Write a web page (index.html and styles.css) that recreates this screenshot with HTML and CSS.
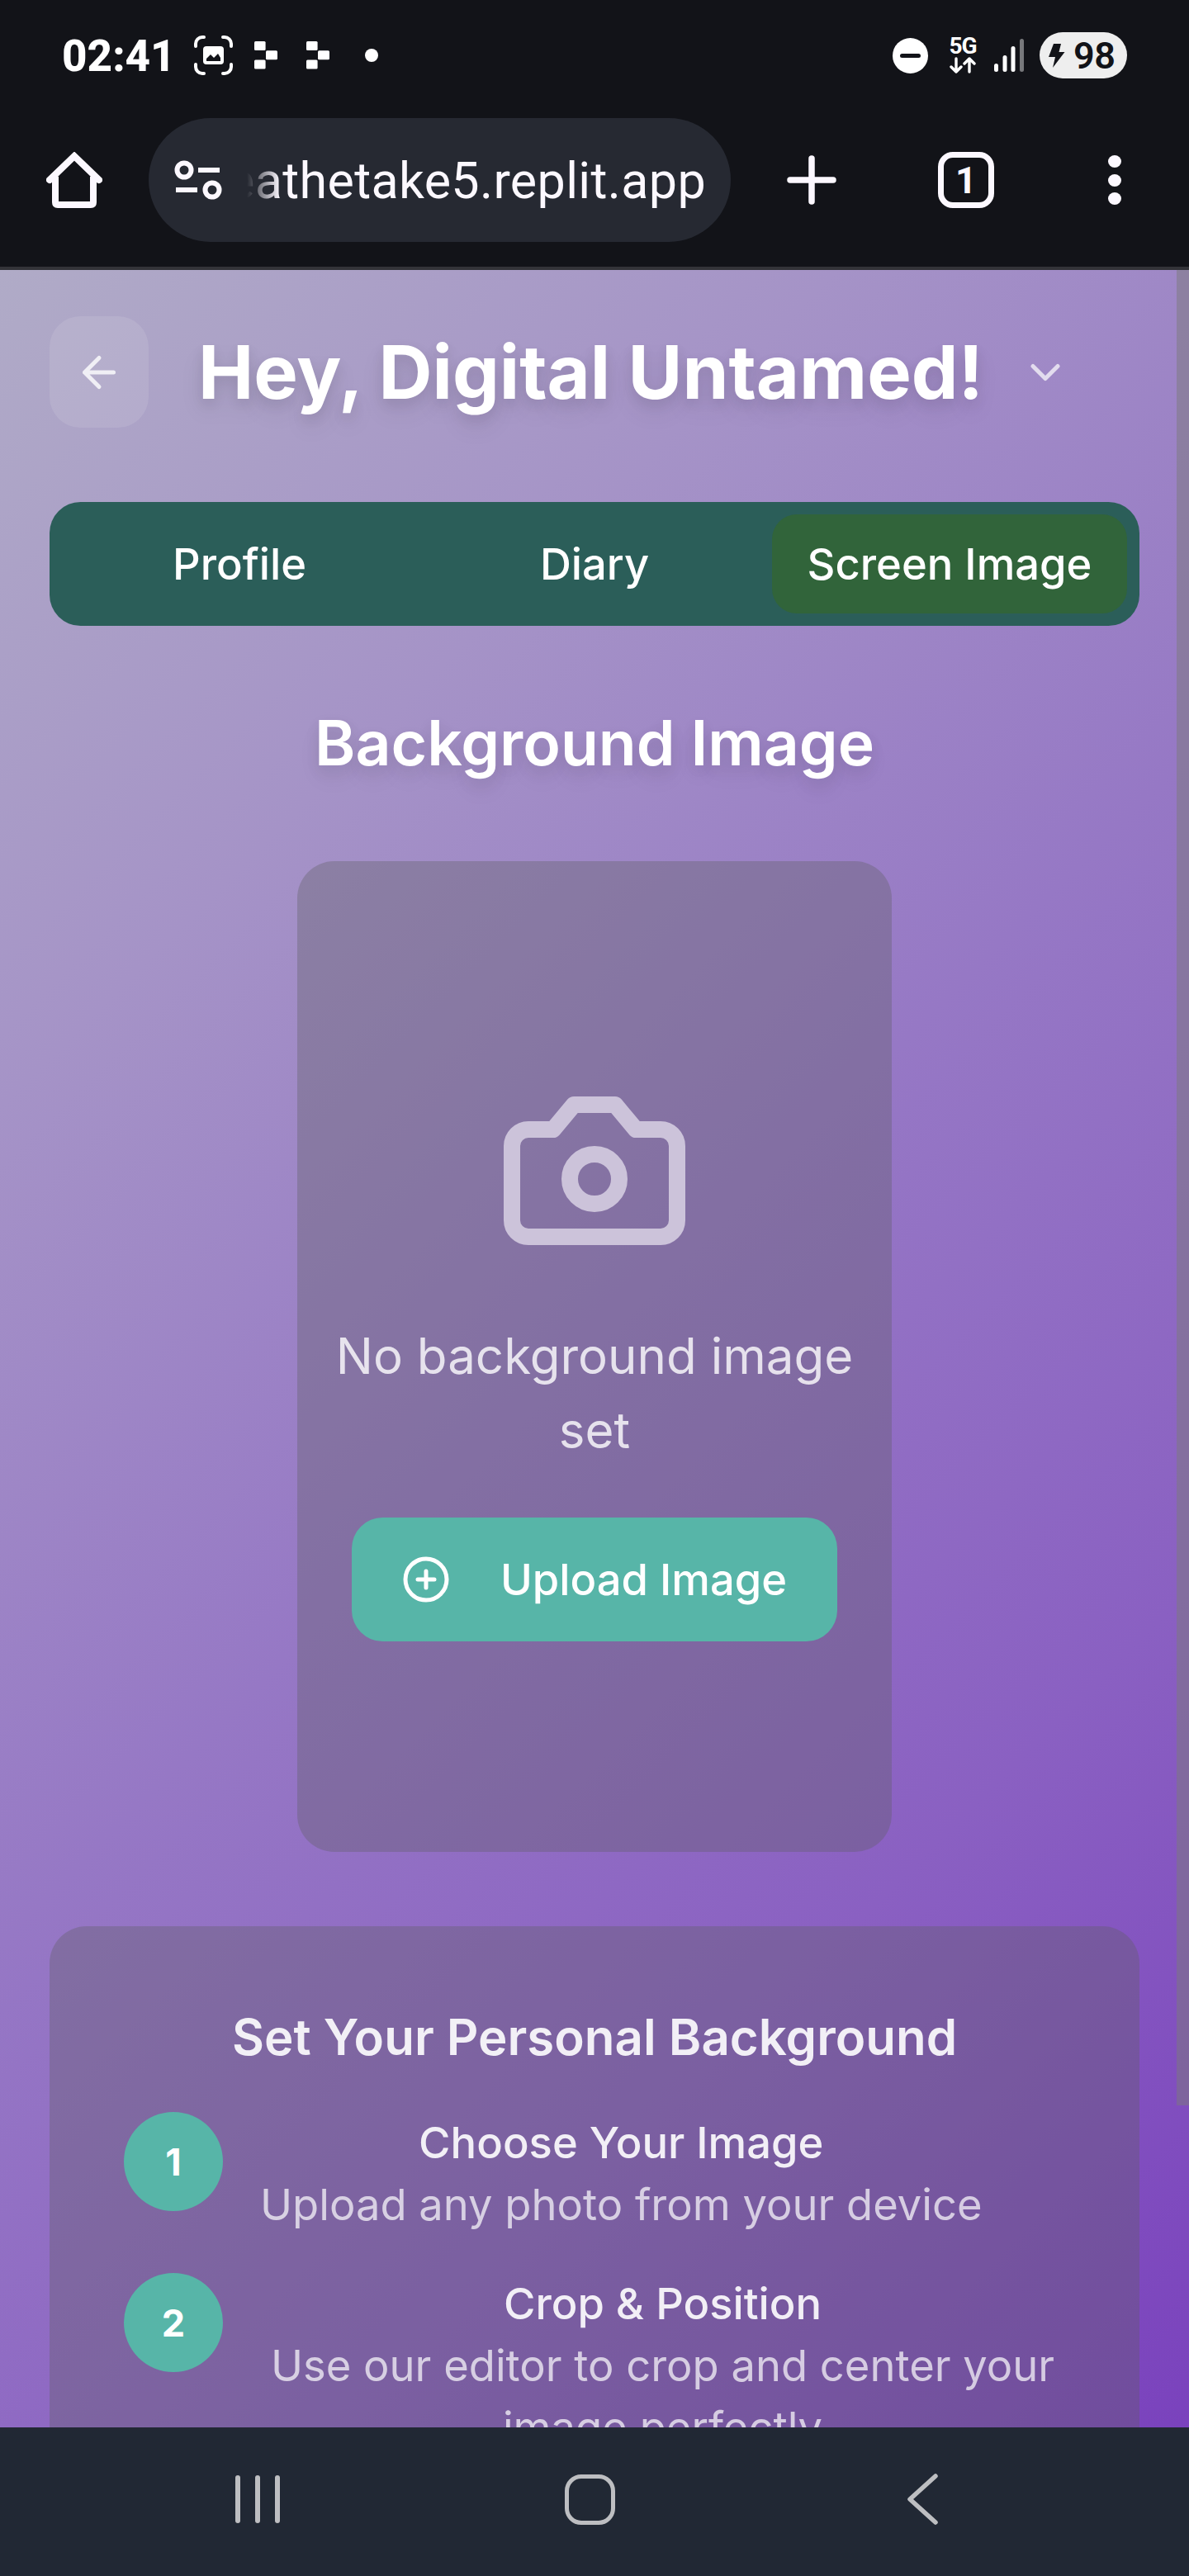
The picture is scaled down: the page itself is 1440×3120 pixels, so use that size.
FILE: index.html
```html
<!DOCTYPE html>
<html lang="en">
<head>
<meta charset="utf-8">
<title>Screen Image</title>
<link rel="stylesheet" href="styles.css">
</head>
<body>
<div class="phone">
  <header class="status">
    <div class="status-left">
      <span class="clock">02:41</span>
      <svg class="shot" viewBox="0 0 47 48" fill="none" stroke="#fff" stroke-width="4" stroke-linecap="round"><path d="M12 2H10a8 8 0 0 0-8 8v3M35 2h2a8 8 0 0 1 8 8v3M12 46H10a8 8 0 0 1-8-8v-3M35 46h2a8 8 0 0 0 8-8v-3"/><rect x="11" y="13" width="25" height="22" rx="4" fill="#fff" stroke="none"/><path d="M15 31v-3l5-5 4 4 5-5 3 5v4z" fill="#121318" stroke="none"/></svg>
      <svg class="flag" viewBox="0 0 28 34" fill="#fff"><rect width="13.6" height="11" rx="1.5"/><rect x="14" y="11.3" width="14" height="11" rx="1.5"/><rect y="22.6" width="13.6" height="11" rx="1.5"/></svg>
      <svg class="flag flag-second" viewBox="0 0 28 34" fill="#fff"><rect width="13.6" height="11" rx="1.5"/><rect x="14" y="11.3" width="14" height="11" rx="1.5"/><rect y="22.6" width="13.6" height="11" rx="1.5"/></svg>
      <span class="more-dot"></span>
    </div>
    <div class="status-right">
      <span class="dnd"><span></span></span>
      <span class="network"><b>5G</b><svg viewBox="0 0 32 20" fill="none" stroke="#fff" stroke-width="3.4" stroke-linecap="round" stroke-linejoin="round"><path d="M8 2v16M2 12l6 6 6-6M24 18V2M18 8l6-6 6 6"/></svg></span>
      <svg class="signal" viewBox="0 0 36 40"><g fill="#fff"><rect y="30" width="5" height="10" rx="2.5"/><rect x="10.5" y="20" width="5" height="20" rx="2.5"/><rect x="20.5" y="9" width="5" height="31" rx="2.5"/></g><rect x="31" width="5" height="40" rx="2.5" fill="#77787b"/></svg>
      <span class="battery"><svg viewBox="0 0 20 29"><path d="M6 0h9L12.500 10H19.500L5 29l3-13H0z" fill="#121318"/></svg>98</span>
    </div>
  </header>

  <div class="toolbar">
    <svg class="home" viewBox="0 0 68 68" fill="none" stroke="#fcf8ff" stroke-width="8"><path d="M4 34 34 5l30 29" stroke-linecap="round"/><path d="M11 30v31q0 3 3 3h40q3 0 3-3V30"/></svg>
    <div class="url">
      <svg viewBox="0 0 58 50" fill="none" stroke="#fcf8ff" stroke-width="6"><circle cx="12" cy="13" r="8.500"/><path d="M29 13h26M2 37h26"/><circle cx="46" cy="37" r="8.500"/></svg>
      <div class="url-clip"><span>eathetake5.replit.app</span></div>
    </div>
    <svg class="plus" viewBox="0 0 60 60" fill="none" stroke="#fcf8ff" stroke-width="7.500" stroke-linecap="round"><path d="M30 4v52M4 30h52"/></svg>
    <span class="tab-count">1</span>
    <span class="menu"><i></i><i></i><i></i></span>
  </div>

  <main class="page">
    <div class="scrollbar"></div>
    <div class="greeting">
      <button class="back"><svg class="ic" viewBox="0 0 24 24"><path d="m12 19-7-7 7-7M19 12H5"/></svg></button>
      <h1>Hey, Digital Untamed!</h1>
      <svg class="ic chevron" viewBox="0 0 24 24"><path d="m6 9 6 6 6-6"/></svg>
    </div>
    <nav class="tabs">
      <span>Profile</span><span>Diary</span><span class="active">Screen Image</span>
    </nav>
    <h2>Background Image</h2>
    <section class="preview">
      <svg class="ic camera" viewBox="0 0 24 24"><path d="M14.500 4h-5L7 7H4a2 2 0 0 0-2 2v9a2 2 0 0 0 2 2h16a2 2 0 0 0 2-2V9a2 2 0 0 0-2-2h-3l-2.500-3z"/><circle cx="12" cy="13" r="3"/></svg>
      <p>No background image set</p>
      <button class="upload"><svg class="ic" viewBox="0 0 24 24"><circle cx="12" cy="12" r="10"/><path d="M8 12h8M12 8v8"/></svg>Upload Image</button>
    </section>
    <section class="guide">
      <h3>Set Your Personal Background</h3>
      <div class="step"><span class="num">1</span><div><h4>Choose Your Image</h4><p>Upload any photo from your device</p></div></div>
      <div class="step"><span class="num">2</span><div><h4>Crop &amp; Position</h4><p>Use our editor to crop and center your image perfectly</p></div></div>
    </section>
  </main>

  <footer class="navbar">
    <span class="recents"><i></i><i></i><i></i></span>
    <span class="nav-home"></span>
    <svg class="nav-back" viewBox="0 0 40 62" fill="none" stroke="#bdbec1" stroke-width="5.500" stroke-linecap="round" stroke-linejoin="round"><path d="M35 3 4 31l31 28"/></svg>
  </footer>
</div>
</body>
</html>
```
FILE: styles.css
```css
* { box-sizing: border-box; margin: 0; padding: 0; }
body { width: 1440px; font-family: Inter, "Liberation Sans", sans-serif; color: #fff; }
button { border: 0; font: inherit; color: inherit; }
i { display: block; }
svg { display: block; flex: none; }
.phone { width: 1440px; height: 3120px; display: flex; flex-direction: column; overflow: hidden; background: #121318; }

.status { height: 134px; flex: none; display: flex; align-items: center; justify-content: space-between; padding: 0 75px; font-family: Roboto, sans-serif; }
.status-left, .status-right { display: flex; align-items: center; }
.clock { width: 160px; padding-top: 2px; font-size: 53px; font-weight: 800; letter-spacing: 0; }
.shot { width: 47px; height: 48px; }
.flag { width: 28px; height: 34px; margin-left: 26px; }
.flag-second { margin-left: 35px; }
.more-dot { width: 16px; height: 16px; border-radius: 50%; background: #fff; margin-left: 43px; }
.dnd { width: 43px; height: 43px; border-radius: 50%; background: #fff; display: flex; align-items: center; justify-content: center; margin-right: 24px; }
.dnd span { width: 25px; height: 5px; border-radius: 3px; background: #121318; }
.network { width: 36px; height: 44px; display: flex; flex-direction: column; align-items: center; justify-content: space-between; margin-right: 20px; }
.network b { font-size: 28px; line-height: 22px; font-weight: 700; letter-spacing: -1px; }
.network svg { width: 32px; height: 20px; }
.signal { width: 36px; height: 40px; margin-right: 19px; }
.battery { width: 106px; height: 56px; border-radius: 28px; background: #eee; color: #121318; display: flex; align-items: center; gap: 10px; padding-left: 11px; font-size: 45px; font-weight: 600; letter-spacing: -0.5px; }
.battery svg { width: 20px; height: 29px; }

.toolbar { height: 193px; flex: none; display: flex; align-items: center; padding: 0 82px 21px 56px; border-bottom: 4px solid #333338; color: #fcf8ff; }
.home { width: 68px; height: 68px; }
.url { width: 705px; height: 150px; margin-left: 56px; border-radius: 75px; background: #262932; display: flex; align-items: center; padding: 0 30px 0 31px; }
.url svg { width: 58px; height: 50px; }
.url-clip { flex: 1; min-width: 0; margin-left: 30px; padding-top: 2px; overflow: hidden; display: flex; justify-content: flex-end; font-family: Roboto, sans-serif; font-size: 61px; letter-spacing: 0.35px; line-height: 80px; -webkit-mask-image: linear-gradient(90deg, transparent, #000 40px); mask-image: linear-gradient(90deg, transparent, #000 40px); }
.plus { width: 60px; height: 60px; margin-left: 68px; }
.tab-count { width: 68px; height: 68px; margin-left: 123px; border: 7.500px solid #fcf8ff; border-radius: 18px; display: flex; align-items: center; justify-content: center; font: 700 45px Roboto, sans-serif; }
.menu { width: 16px; height: 60px; margin-left: auto; display: flex; flex-direction: column; justify-content: space-between; }
.menu i { width: 16px; height: 15px; border-radius: 50%; background: #fcf8ff; }

.page { position: relative; height: 2613px; flex: none; overflow: hidden; padding: 56px 60px 0; background: linear-gradient(135deg, #b0abc7 0%, #a593c7 25%, #9678c5 50%, #8a60c2 75%, #7a42bd 100%); }
.scrollbar { position: absolute; right: 0; top: 0; width: 15px; height: 2223px; background: rgba(124, 122, 124, .5); }
.ic { width: 60px; height: 60px; fill: none; stroke: currentColor; stroke-width: 2; stroke-linecap: round; stroke-linejoin: round; }
.greeting { display: flex; align-items: center; height: 135px; }
.back { width: 120px; height: 135px; border-radius: 37.500px; background: rgba(255, 255, 255, .1); display: flex; align-items: center; justify-content: center; color: rgba(255, 255, 255, .8); }
h1 { margin-left: 60px; font-size: 90px; line-height: 120px; font-weight: 700; white-space: nowrap; text-shadow: 0 15px 30px rgba(0, 0, 0, .08), 0 7px 15px rgba(0, 0, 0, .09); }
.chevron { margin-left: auto; margin-right: 84px; color: rgba(255, 255, 255, .7); }
.tabs { margin-top: 90px; height: 150px; border-radius: 37.500px; padding: 15px; background: #2b5e59; display: grid; grid-template-columns: repeat(3, 1fr); font-size: 52.500px; font-weight: 500; }
.tabs span { display: flex; align-items: center; justify-content: center; border-radius: 30px; }
.tabs .active { background: #31643a; }
h2 { margin-top: 90px; font-size: 75px; line-height: 103px; font-weight: 600; text-align: center; text-shadow: 0 7px 18px rgba(0, 0, 0, .09), 0 15px 30px rgba(0, 0, 0, .06); }
.preview { width: 720px; height: 1200px; margin: 92px auto 0; border-radius: 45px; background: rgba(94, 94, 96, .34); display: flex; flex-direction: column; align-items: center; justify-content: center; }
.camera { width: 240px; height: 240px; color: #ccc3da; }
.preview p { margin: 59px 0 61px; width: 660px; font-size: 60px; line-height: 90px; text-align: center; color: rgba(255, 255, 255, .8); }
.upload { width: 588px; height: 150px; border-radius: 37.500px; background: #57b5a8; display: flex; align-items: center; gap: 60px; padding: 0 60px; font-size: 52.500px; font-weight: 500; white-space: nowrap; }
.guide { margin-top: 90px; height: 1200px; border-radius: 45px; padding: 90px; background: rgba(94, 94, 96, .34); }
.guide h3 { padding-bottom: 2px; font-size: 60px; line-height: 88px; font-weight: 600; text-align: center; color: rgba(255, 255, 255, .9); }
.step { display: flex; align-items: flex-start; gap: 45px; margin-top: 45px; text-align: center; font-size: 52.500px; line-height: 75px; }
.num { width: 120px; height: 120px; flex: none; border-radius: 50%; background: #57b5a8; display: flex; align-items: center; justify-content: center; font-size: 45px; font-weight: 700; }
.step h4 { font: inherit; font-weight: 500; color: rgba(255, 255, 255, .9); }
.step p { color: rgba(255, 255, 255, .7); }

.navbar { height: 180px; flex: none; background: #212834; display: flex; align-items: center; padding: 0 0 6px 285px; }
.recents { display: flex; justify-content: space-between; width: 54px; height: 58px; }
.recents i { width: 6px; border-radius: 3px; background: #bdbec1; }
.nav-home { width: 61px; height: 61px; margin-left: 345px; border: 5.500px solid #bdbec1; border-radius: 20px; }
.nav-back { width: 40px; height: 62px; margin-left: 353px; }
```
